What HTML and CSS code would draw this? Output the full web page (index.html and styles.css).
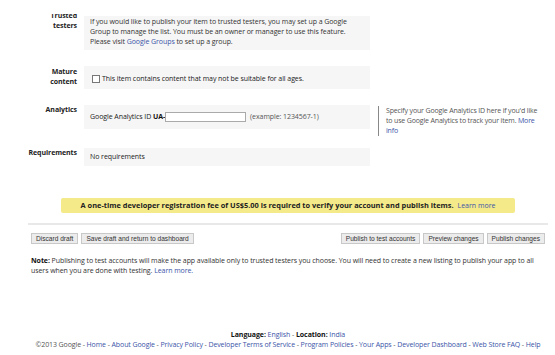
FILE: index.html
```html
<!DOCTYPE html>
<html lang="en">
<head>
    <meta charset="UTF-8">
    <meta name="viewport" content="width=device-width, initial-scale=1.0">
    <title>Edit item</title>
    <link rel="stylesheet" href="styles.css">
</head>
<body>
    <div class="top-cover"></div>
    <div class="page">
        <div class="form">
            <div class="row row-testers">
                <div class="label label-testers">Trusted<br>testers</div>
                <div class="box box-testers">
                    If you would like to publish your item to trusted testers, you may set up a Google
                    Group to manage the list. You must be an owner or manager to use this feature.
                    Please visit <a href="#">Google Groups</a> to set up a group.
                </div>
            </div>

            <div class="row row-mature">
                <div class="label">Mature<br>content</div>
                <div class="box box-mature">
                    <label class="check"><span class="checkbox"></span>This item contains content that may not be suitable for all ages.</label>
                </div>
            </div>

            <div class="row row-analytics">
                <div class="label">Analytics</div>
                <div class="box box-analytics">
                    Google Analytics ID <b>UA-</b><input class="ga-input" type="text"><span class="example">(example: 1234567-1)</span>
                </div>
                <div class="help">
                    Specify your Google Analytics ID here if you'd like to use Google Analytics to track your item. <a href="#">More info</a>
                </div>
            </div>

            <div class="row row-req">
                <div class="label">Requirements</div>
                <div class="box box-req">No requirements</div>
            </div>
        </div>

        <div class="banner">
            <b>A one-time developer registration fee of US$5.00 is required to verify your account and publish items.</b>
            <a href="#">Learn more</a>
        </div>

        <div class="actions">
            <div class="btn-group">
                <button class="btn">Discard draft</button>
                <button class="btn">Save draft and return to dashboard</button>
            </div>
            <div class="btn-group">
                <button class="btn">Publish to test accounts</button>
                <button class="btn">Preview changes</button>
                <button class="btn">Publish changes</button>
            </div>
        </div>

        <p class="note">
            <b>Note:</b> Publishing to test accounts will make the app available only to trusted testers you choose. You will need to create a new listing to publish your app to all
            users when you are done with testing. <a href="#">Learn more.</a>
        </p>

        <footer class="footer">
            <div><b>Language:</b> <a href="#">English</a> - <b>Location:</b> <a href="#">India</a></div>
            <div class="footer-links">©2013 Google - <a href="#">Home</a> - <a href="#">About Google</a> - <a href="#">Privacy Policy</a> - <a href="#">Developer Terms of Service</a> - <a href="#">Program Policies</a> - <a href="#">Your Apps</a> - <a href="#">Developer Dashboard</a> - <a href="#">Web Store FAQ</a> - <a href="#">Help</a></div>
        </footer>
    </div>
</body>
</html>
```

FILE: styles.css
```css
body {
    margin: 0;
    padding: 0;
    background: #fff;
    color: #333;
    font-family: "Open Sans", Arial, sans-serif;
    font-size: 7px;
    line-height: 10px;
    letter-spacing: -0.07px;
}

a {
    color: #3b55a8;
    text-decoration: none;
}

/* page is scrolled: the white header strip hides what is above */
.top-cover {
    position: fixed;
    top: 0;
    left: 0;
    right: 0;
    height: 14px;
    background: #fff;
    z-index: 2;
}

.page {
    width: 520px;
    margin-left: 28px;
}

/* form rows */

.form {
    padding-top: 16px;
}

.row {
    display: grid;
    grid-template-columns: 49px 286px 164px;
    column-gap: 7px;
    align-items: start;
    margin-bottom: 16px;
}

.row .box {
    grid-column: 2;
}

.label {
    text-align: right;
    font-weight: bold;
    color: #222;
}

.label-testers {
    margin-top: -5px;
}

.row-mature .label {
    padding-top: 1px;
}

.box {
    background: #f6f6f6;
    padding: 0 6px;
}

.box-testers {
    padding-top: 1px;
    padding-bottom: 3px;
}

.box-mature {
    padding-top: 8px;
    padding-bottom: 5px;
}

.check {
    display: flex;
    align-items: center;
    gap: 2px;
    color: #222;
}

.checkbox {
    display: inline-block;
    width: 6px;
    height: 6px;
    border: 1px solid #777;
    background: #fff;
    margin-left: 2px;
}

.row-analytics {
    margin-bottom: 12px;
}

.box-analytics {
    padding-top: 7px;
    padding-bottom: 7px;
    color: #222;
}

.box-analytics b {
    color: #111;
}

.ga-input {
    width: 81px;
    height: 10px;
    box-sizing: border-box;
    border: 1px solid #aaa;
    padding: 0;
    margin: 0 4px 0 0;
    vertical-align: middle;
    font-size: 7px;
}

.example {
    color: #555;
}

.help {
    grid-column: 3;
    margin-left: 1px;
    margin-top: 1px;
    border-left: 1px solid #888;
    padding: 0 0 0 7px;
    color: #555;
    letter-spacing: -0.16px;
}

.box-req {
    padding-top: 4px;
    padding-bottom: 4px;
    color: #222;
}

/* registration banner */

.banner {
    margin: 32px 33px 0 33px;
    background: #f5ea8a;
    border-radius: 2px;
    text-align: center;
    font-size: 7.4px;
    line-height: 15px;
    letter-spacing: 0;
    color: #222;
}

.banner a {
    margin-left: 2px;
    font-size: 7px;
}

/* actions */

.actions {
    margin-top: 10px;
    border-top: 2px solid #e8e8e8;
    padding: 8px 3px 0 3px;
    display: flex;
    justify-content: space-between;
}

.btn-group {
    display: flex;
    gap: 3px;
}

.btn {
    font-family: "Liberation Sans", Arial, sans-serif;
    font-size: 6.6px;
    letter-spacing: 0;
    height: 11px;
    line-height: 9px;
    padding: 0 4px;
    background: #ececec;
    border: 1px solid #c8c8c8;
    color: #333;
    cursor: pointer;
}

.btn:hover {
    background: #e0e0e0;
}

/* note and footer */

.note {
    margin: 12px 0 0 3px;
    color: #333;
}

.note b {
    color: #111;
}

.footer {
    margin-top: 54px;
    text-align: center;
    color: #555;
}

.footer-links {
    white-space: nowrap;
    letter-spacing: -0.1px;
}

.footer b {
    color: #111;
}
```
